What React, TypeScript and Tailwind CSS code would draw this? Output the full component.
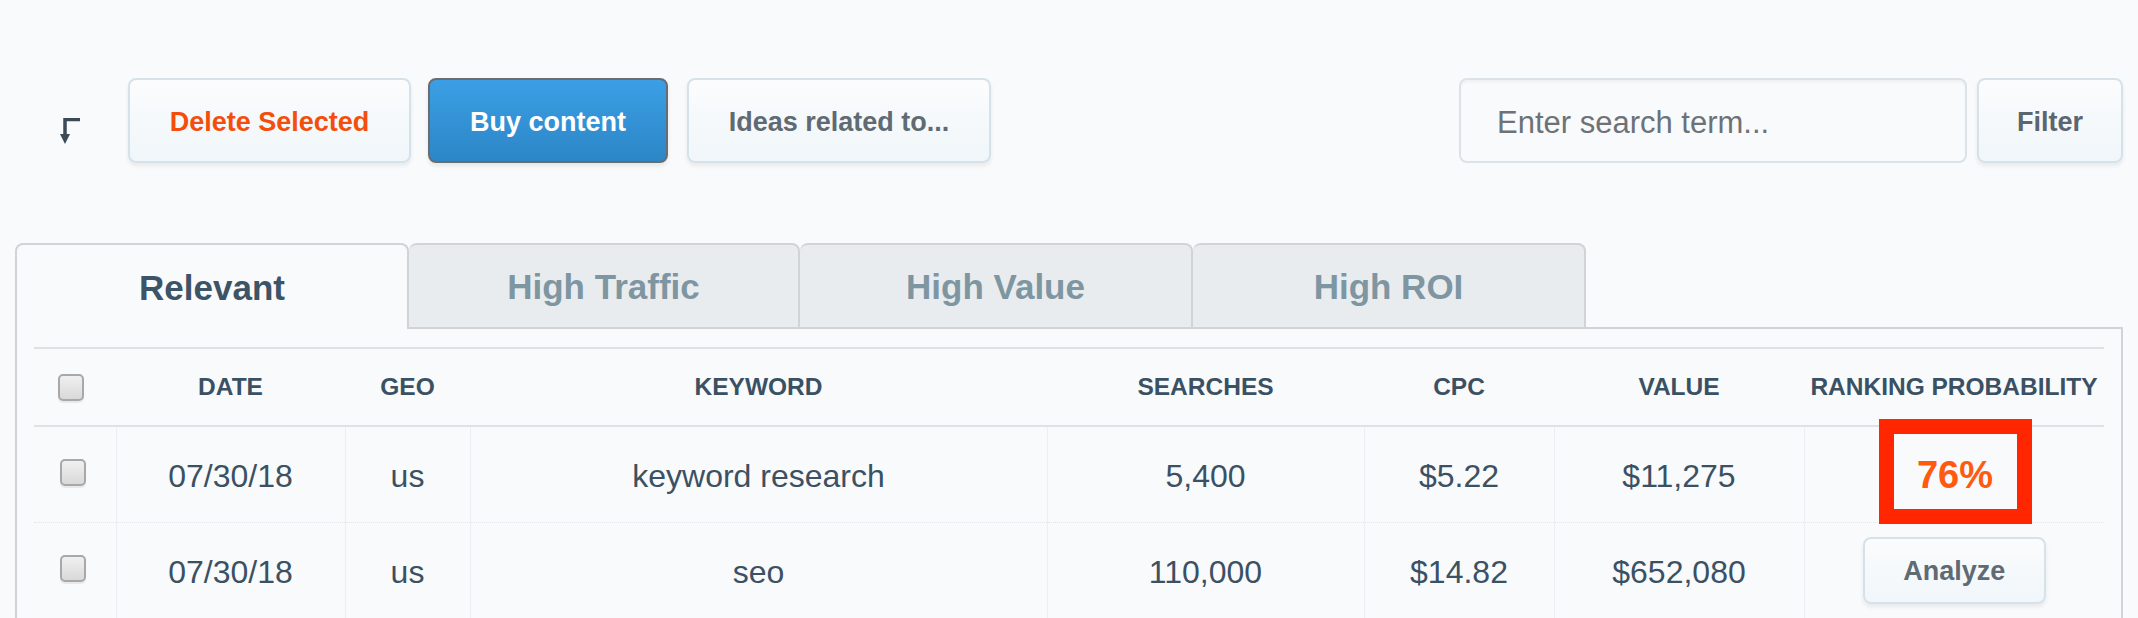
import React from "react";

const Checkbox = () => (
  <div className="w-[26px] h-[27px] rounded-[5px] border-2 border-[#a8a8a8] bg-linear-to-b from-[#f0f0f0] to-[#d9d9d9] shadow-[0_2px_1px_rgba(0,0,0,0.07)]" />
);

const lightBtn =
  "h-[85px] pt-[4px] rounded-[8px] border-2 border-[#d6e2ea] bg-linear-to-b from-[#fbfcfd] to-[#f0f6fa] shadow-[0_3px_4px_rgba(0,0,0,0.07)] font-bold flex items-center justify-center";

const headers = ["DATE", "GEO", "KEYWORD", "SEARCHES", "CPC", "VALUE", "RANKING PROBABILITY"];

const rows = [
  { date: "07/30/18", geo: "us", kw: "keyword research", s: "5,400", cpc: "$5.22", v: "$11,275", rank: "76%" },
  { date: "07/30/18", geo: "us", kw: "seo", s: "110,000", cpc: "$14.82", v: "$652,080", rank: null },
];

export default function App() {
  return (
    <div
      className="w-[2138px] h-[618px] overflow-hidden bg-[#f8fafc] text-[#3b5163]"
      style={{ fontFamily: "'Liberation Sans', Arial, Helvetica, sans-serif" }}
    >
      {/* toolbar */}
      <div className="flex items-center pt-[78px] pl-[60px] pr-[15px]">
        <svg width="22" height="27" viewBox="0 0 22 27" className="mt-[22px]">
          <path d="M20 1.5 H5 V17" fill="none" stroke="#3b4a56" strokeWidth="3.5" />
          <path d="M0 16 H10 L5 26 Z" fill="#3b4a56" />
        </svg>
        <button className={`${lightBtn} ml-[46px] w-[283px] text-[27px] text-[#f34e0b]`}>Delete Selected</button>
        <button className="ml-[17px] w-[240px] h-[85px] pt-[4px] rounded-[8px] border-2 border-[#686d72] bg-linear-to-b from-[#3b9fe5] to-[#2c86c6] text-white font-bold text-[27px] shadow-[0_3px_4px_rgba(0,0,0,0.08)] flex items-center justify-center">
          Buy content
        </button>
        <button className={`${lightBtn} ml-[19px] w-[304px] text-[27px] text-[#5f6a72]`}>Ideas related to...</button>
        <div className="flex-1" />
        <input
          className="w-[508px] h-[85px] rounded-[8px] border-2 border-[#dbe3e9] bg-[#f9fafc] pl-[36px] pt-[5px] text-[31px] outline-none placeholder:text-[#6d7276] shadow-[inset_0_3px_2px_rgba(0,0,0,0.03)]"
          placeholder="Enter search term..."
        />
        <button className={`${lightBtn} ml-[10px] w-[146px] text-[27px] text-[#5b666e]`}>Filter</button>
      </div>

      {/* tabs */}
      <div className="flex items-end mt-[80px] ml-[15px] mr-[15px] h-[86px]">
        <div className="w-[394px] h-[86px] pt-[3px] rounded-t-[8px] border-2 border-b-0 border-[#d0d4d7] bg-[#f8fafc] flex items-center justify-center font-bold text-[35px] text-[#3c5466]">
          Relevant
        </div>
        {["High Traffic", "High Value", "High ROI"].map((t, i) => (
          <div
            key={t}
            className={`${i === 0 ? "w-[391px]" : "w-[393px]"} h-[86px] pt-[3px] rounded-t-[8px] border-2 border-l-0 border-[#d0d4d7] bg-[#e9ecee] flex items-center justify-center font-bold text-[35px] text-[#7e96a2]`}
          >
            {t}
          </div>
        ))}
        <div className="flex-1 border-b-2 border-[#d0d4d7]" />
      </div>

      {/* panel */}
      <div className="mx-[15px] border-x-2 border-[#d0d4d7] pt-[18px] px-[17px] h-[400px]">
        <table className="w-[2070px] table-fixed border-collapse">
          <colgroup>
            <col className="w-[82px]" />
            <col className="w-[229px]" />
            <col className="w-[125px]" />
            <col className="w-[577px]" />
            <col className="w-[317px]" />
            <col className="w-[190px]" />
            <col className="w-[250px]" />
            <col className="w-[300px]" />
          </colgroup>
          <thead>
            <tr className="h-[78px] border-t-2 border-b-2 border-[#dfe2e5]">
              <th className="pl-[24px] text-left align-middle">
                <Checkbox />
              </th>
              {headers.map((h) => (
                <th key={h} className="text-center font-bold text-[24.5px] whitespace-nowrap text-[#3a5164] p-0">
                  {h}
                </th>
              ))}
            </tr>
          </thead>
          <tbody>
            {rows.map((r, idx) => (
              <tr key={idx} className="h-[96px] border-b border-dotted border-[#e3e6e9]">
                <td className="pl-[26px] align-middle">
                  <div className="mt-[-4px]">
                    <Checkbox />
                  </div>
                </td>
                {[r.date, r.geo, r.kw, r.s, r.cpc, r.v].map((c, j) => (
                  <td key={j} className="text-center text-[32px] border-l border-[#eceff1] p-0 pt-[3px]">
                    {c}
                  </td>
                ))}
                <td className="relative text-center border-l border-[#eceff1] p-0">
                  {r.rank ? (
                    <div className="absolute left-[74px] top-[-8px] w-[153px] h-[105px] pt-[8px] border-[15px] border-[#ff2600] flex items-center justify-center font-bold text-[38px] text-[#ff5a0f]">
                      {r.rank}
                    </div>
                  ) : (
                    <div className="flex justify-center">
                      <button className="w-[183px] h-[67px] pt-[3px] rounded-[8px] border-2 border-[#d6e2ea] bg-linear-to-b from-[#fbfcfd] to-[#f0f6fa] shadow-[0_3px_4px_rgba(0,0,0,0.07)] font-bold text-[27px] text-[#5f6a72] flex items-center justify-center">
                        Analyze
                      </button>
                    </div>
                  )}
                </td>
              </tr>
            ))}
          </tbody>
        </table>
      </div>
    </div>
  );
}
